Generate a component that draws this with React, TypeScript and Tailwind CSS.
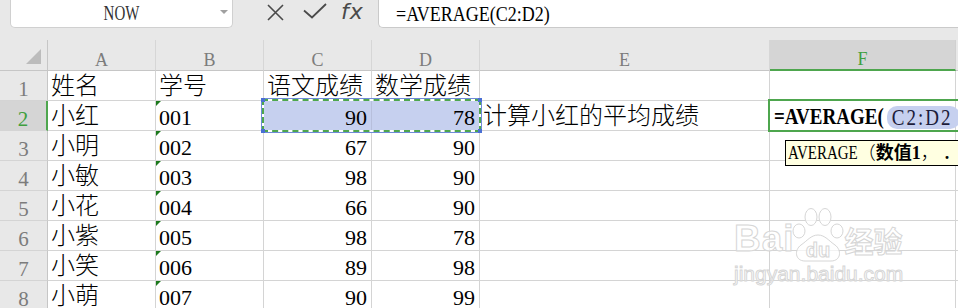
import React from 'react';

type Align = 'left' | 'right';

const rows: { a: string; b: string; c: string; d: string }[] = [
  { a: '姓名', b: '学号', c: '语文成绩', d: '数学成绩' },
  { a: '小红', b: '001', c: '90', d: '78' },
  { a: '小明', b: '002', c: '67', d: '90' },
  { a: '小敏', b: '003', c: '98', d: '90' },
  { a: '小花', b: '004', c: '66', d: '90' },
  { a: '小紫', b: '005', c: '98', d: '78' },
  { a: '小笑', b: '006', c: '89', d: '98' },
  { a: '小萌', b: '007', c: '90', d: '99' },
];

function isCjk(s: string) {
  return /[\u4e00-\u9fff]/.test(s);
}

function Txt({ s }: { s: string }) {
  if (!s) return null;
  if (isCjk(s)) {
    return <span className="text-[24px] leading-none pb-[2px] font-light whitespace-nowrap">{s}</span>;
  }
  return <span className="text-[22px] leading-none pb-[1px] whitespace-nowrap">{s}</span>;
}

function Cell({
  s = '',
  align = 'left',
  tri = false,
  extra = '',
  children,
}: {
  s?: string;
  align?: Align;
  tri?: boolean;
  extra?: string;
  children?: React.ReactNode;
}) {
  return (
    <div
      className={`relative h-[30px] border-r border-b border-[#d4d4d4] flex items-end ${
        align === 'right' ? 'justify-end pr-[4px]' : 'pl-[3px]'
      } ${extra}`}
    >
      {tri && (
        <div className="absolute left-0 top-0 w-0 h-0 border-t-[5px] border-r-[5px] border-t-[#1d7a1d] border-r-transparent" />
      )}
      {children ?? <Txt s={s} />}
    </div>
  );
}

function ColHead({ l, active = false }: { l: string; active?: boolean }) {
  return (
    <div
      className={`h-[31px] flex items-end justify-center pb-[1px] text-[18px] leading-none border-r ${
        active
          ? 'bg-[#d5d5d5] text-[#3f9f3f] border-b-2 border-b-[#4ea64e] border-r-[#d0d0d0]'
          : 'bg-[#e8e8e8] text-[#7c7c7c] border-b border-b-[#c6c6c6] border-r-[#d6d6d6]'
      }`}
    >
      {l}
    </div>
  );
}

function RowHead({ n, active = false }: { n: number; active?: boolean }) {
  return (
    <div
      className={`h-[30px] flex items-end justify-center text-[21px] leading-none border-b border-b-[#d4d4d4] ${
        active
          ? 'bg-[#d5d5d5] text-[#3f9f3f] border-r-2 border-r-[#4ea64e]'
          : 'bg-[#e8e8e8] text-[#7c7c7c] border-r border-r-[#c6c6c6]'
      }`}
    >
      {n}
    </div>
  );
}

export default function App() {
  return (
    <div className="relative w-[958px] h-[308px] overflow-hidden bg-white font-['Liberation_Serif','Noto_Sans_CJK_SC',serif] text-black">
      {/* toolbar */}
      <div className="h-[40px] bg-[#e8e8e8] flex items-start">
        <div className="relative ml-[10px] w-[223px] h-[28px] bg-white rounded-b-[5px] border border-t-0 border-[#d0d0d0] flex items-center justify-center">
          <span className="inline-block text-[15px] leading-none text-[#333] scale-y-[1.4]">NOW</span>
          <div className="absolute right-[4px] top-[10px] w-0 h-0 border-l-[4px] border-r-[4px] border-t-[4px] border-l-transparent border-r-transparent border-t-[#a0a0a0]" />
        </div>
        <div className="w-[145px] h-[28px] relative">
          <svg className="absolute left-[34px] top-[4px]" width="17" height="17" viewBox="0 0 17 17">
            <path d="M1 1 L16 16 M16 1 L1 16" stroke="#4a4a4a" strokeWidth="1.6" fill="none" />
          </svg>
          <svg className="absolute left-[70px] top-[3px]" width="24" height="16" viewBox="0 0 24 16">
            <path d="M1 7.5 L9 14.5 L23 1" stroke="#4a4a4a" strokeWidth="1.8" fill="none" />
          </svg>
          <span className="absolute left-[108px] top-[0px] text-[22px] leading-[24px] italic text-[#4a4a4a] font-['DejaVu_Sans',sans-serif] tracking-[1px]">
            fx
          </span>
        </div>
        <div className="flex-1 h-[28px] bg-white rounded-bl-[5px] border-l border-b border-[#cacaca] flex items-center pl-[17px]">
          <span className="inline-block text-[18px] leading-none scale-y-[1.22]">=AVERAGE(C2:D2)</span>
        </div>
      </div>

      {/* grid */}
      <div className="relative">
        <div className="grid grid-cols-[48px_108px_108px_108px_108px_290px_186px_2px]">
          {/* header row */}
          <div className="relative h-[31px] bg-[#e8e8e8] border-r border-b border-[#c6c6c6]">
            <svg className="absolute left-[26px] top-[9px]" width="15" height="15" viewBox="0 0 15 15">
              <path d="M15 0 L15 15 L0 15 Z" fill="#bcbcbc" />
            </svg>
          </div>
          <ColHead l="A" />
          <ColHead l="B" />
          <ColHead l="C" />
          <ColHead l="D" />
          <ColHead l="E" />
          <ColHead l="F" active />
          <div className="h-[31px] bg-[#e8e8e8] border-b border-[#c6c6c6]" />

          {rows.map((r, i) => {
            const sel = i === 1;
            return (
              <React.Fragment key={i}>
                <RowHead n={i + 1} active={sel} />
                <Cell s={r.a} />
                <Cell s={r.b} tri={i > 0} />
                <Cell
                  s={r.c}
                  align={i === 0 ? 'left' : 'right'}
                  extra={sel ? 'bg-[#c6d0ef] border-r-[#b7bfdc]' : ''}
                />
                <Cell s={r.d} align={i === 0 ? 'left' : 'right'} extra={sel ? 'bg-[#c6d0ef]' : ''} />
                <Cell s={sel ? '计算小红的平均成绩' : ''} />
                {sel ? (
                  <Cell extra="overflow-visible">
                    <div className="flex items-end whitespace-nowrap pb-[2px] pl-[1px]">
                      <span className="inline-block text-[19px] leading-none font-bold origin-bottom scale-y-[1.2]">
                        =AVERAGE(
                      </span>
                      <span className="ml-[3px] mb-[-1px] h-[23px] pl-[5px] pr-[8px] rounded-[10px] bg-[#c6d0ef] flex items-center">
                        <span className="inline-block text-[19px] leading-none tracking-[2px] text-[#1c1c3a] scale-y-[1.2]">
                          C2:D2
                        </span>
                      </span>
                    </div>
                  </Cell>
                ) : (
                  <Cell />
                )}
                <div className="h-[30px] border-b border-[#d4d4d4]" />
              </React.Fragment>
            );
          })}
        </div>

        {/* C2:D2 selection (marching ants) */}
        <div className="absolute left-[262px] top-[59px] w-[219px] h-[33px] border-2 border-white outline outline-1 outline-[#6f8bd8]">
          <div className="absolute -inset-[2px] border-2 border-dashed border-[#4ea64e]" />
          <div className="absolute -left-[3px] -top-[3px] w-[4px] h-[4px] bg-[#4a6fd4]" />
          <div className="absolute -right-[3px] -top-[3px] w-[4px] h-[4px] bg-[#4a6fd4]" />
          <div className="absolute -left-[3px] -bottom-[3px] w-[4px] h-[4px] bg-[#4a6fd4]" />
          <div className="absolute -right-[3px] -bottom-[3px] w-[4px] h-[4px] bg-[#4a6fd4]" />
        </div>

        {/* active cell F2 */}
        <div className="absolute left-[768px] top-[59px] w-[200px] h-[33px] border-2 border-[#4ea64e]" />

        {/* tooltip */}
        <div className="absolute left-[785px] top-[100px] w-[200px] h-[26px] bg-[#ffffe1] border border-black flex items-center pl-[2px] whitespace-nowrap">
          <span className="inline-block text-[15px] leading-none scale-y-[1.25]">AVERAGE</span>
          <span className="text-[18px] leading-none font-light">（</span>
          <span className="text-[18px] leading-none font-bold">数值1</span>
          <span className="text-[18px] leading-none font-light">，</span>
          <span className="ml-[6px] text-[18px] leading-none font-bold">.</span>
        </div>
      </div>

      {/* watermark */}
      <div className="absolute left-[734px] top-[205px] w-[180px] h-[80px] pointer-events-none">
        <div className="flex items-end h-[52px]">
          <span className="font-['Liberation_Sans',sans-serif] font-bold text-[37px] leading-none tracking-[1px] text-white/70 [-webkit-text-stroke:1px_#d6d6d6] pb-[0px]">
            Bai
          </span>
          <svg width="54" height="56" viewBox="0 0 54 56" className="mb-[-6px] -ml-[4px]">
            <g fill="rgba(255,255,255,0.7)" stroke="#d6d6d6" strokeWidth="1">
              <ellipse cx="8" cy="24" rx="6" ry="7" />
              <ellipse cx="20" cy="10" rx="6" ry="8.5" />
              <ellipse cx="34" cy="10" rx="6" ry="8.5" />
              <ellipse cx="46" cy="24" rx="6" ry="7" />
              <path d="M27 28 C34 28 38 34 44 38 C51 43 50 54 40 54 L14 54 C4 54 3 43 10 38 C16 34 20 28 27 28 Z" />
            </g>
            <text
              x="27"
              y="50"
              textAnchor="middle"
              fontFamily="Liberation Sans, sans-serif"
              fontWeight="bold"
              fontSize="20"
              fill="rgba(255,255,255,0.7)"
              stroke="#d6d6d6"
              strokeWidth="1"
            >
              du
            </text>
          </svg>
          <span className="font-['Noto_Sans_CJK_SC',sans-serif] font-bold text-[29px] leading-none text-white/70 [-webkit-text-stroke:1px_#d6d6d6] pb-[2px]">
            经验
          </span>
        </div>
        <div className="mt-[6px] font-['Liberation_Sans',sans-serif] text-[21px] leading-none text-white/70 [-webkit-text-stroke:1px_#d6d6d6]">
          jingyan.baidu.com
        </div>
      </div>
    </div>
  );
}
